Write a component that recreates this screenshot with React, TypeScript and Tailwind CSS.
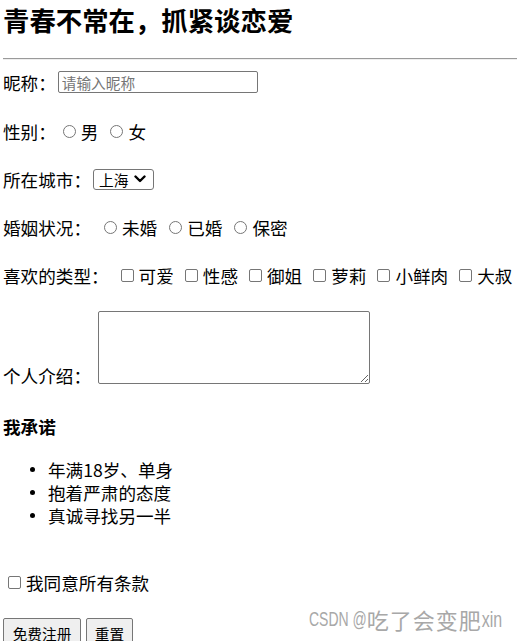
import React from "react";

const radioCls =
  "appearance-none shrink-0 w-[13px] h-[13px] rounded-full border border-[#767676] bg-white m-0";
const checkCls =
  "appearance-none shrink-0 w-[13px] h-[13px] rounded-[2px] border border-[#767676] bg-white m-0";

function Choice({ type, name, label, first, firstGap }: { type: "radio" | "checkbox"; name: string; label: string; first?: boolean; firstGap?: string }) {
  return (
    <label className={`flex items-center ${first ? firstGap : type === "radio" ? "ml-[12px]" : "ml-[11px]"}`}>
      <input type={type} name={name} className={type === "radio" ? radioCls : checkCls} />
      <span className="ml-[5px]">{label}</span>
    </label>
  );
}

export default function App() {
  const types = ["可爱", "性感", "御姐", "萝莉", "小鲜肉", "大叔"];
  const promises = ["年满18岁、单身", "抱着严肃的态度", "真诚寻找另一半"];

  return (
    <div className="relative w-full h-[641px] overflow-hidden bg-white text-black px-[3px] font-['Noto_Sans_CJK_SC','Microsoft_YaHei',sans-serif] text-[17.6px] leading-[23px]">
      <h2 className="h-[38px] flex items-center text-[26.4px] font-bold whitespace-nowrap">
        青春不常在，抓紧谈恋爱
      </h2>
      <hr className="mt-[20px] h-0 border-t border-t-[#9a9a9a] border-b border-b-[#eeeeee]" />

      <form onSubmit={(e) => e.preventDefault()}>
        <div className="h-[44px] flex items-center">
          <span>昵称：</span>
          <input
            type="text"
            placeholder="请输入昵称"
            className="ml-[2px] w-[200px] h-[22px] border border-[#767676] rounded-[2px] px-[3px] text-[14.67px] placeholder:text-[#757575] outline-none"
          />
        </div>

        <div className="mt-[3px] h-[48px] flex items-center">
          <span>性别：</span>
          <Choice type="radio" name="sex" label="男" first firstGap="ml-[7px]" />
          <Choice type="radio" name="sex" label="女" />
        </div>

        <div className="h-[48px] flex items-center">
          <span>所在城市：</span>
          <div className="ml-[2px] h-[21px] flex items-center border border-[#767676] rounded-[3px] pl-[5px] pr-[7px] text-[14.67px]">
            <span>上海</span>
            <svg className="ml-[6px]" width="12" height="8" viewBox="0 0 12 8" fill="none">
              <path d="M1.5 1.5 L6 6 L10.5 1.5" stroke="#000" strokeWidth="2.4" strokeLinecap="round" strokeLinejoin="round" />
            </svg>
          </div>
        </div>

        <div className="h-[48px] flex items-center">
          <span>婚姻状况：</span>
          <Choice type="radio" name="marry" label="未婚" first firstGap="ml-[13px]" />
          <Choice type="radio" name="marry" label="已婚" />
          <Choice type="radio" name="marry" label="保密" />
        </div>

        <div className="h-[48px] flex items-center whitespace-nowrap">
          <span>喜欢的类型：</span>
          {types.map((t, i) => (
            <Choice key={t} type="checkbox" name="like" label={t} first={i === 0} firstGap="ml-[12px]" />
          ))}
        </div>

        <div className="mt-[12px] flex items-end">
          <span className="mb-[-3px]">个人介绍：</span>
          <textarea className="ml-[7px] w-[272px] h-[73px] border border-[#767676] rounded-[2px] resize outline-none" />
        </div>

        <h4 className="mt-[31px] h-[23px] font-bold">我承诺</h4>
        <ul className="mt-[20px]">
          {promises.map((p) => (
            <li key={p} className="h-[23px] flex items-center">
              <span className="ml-[26.5px] w-[5px] h-[5px] rounded-full bg-black" />
              <span className="ml-[13.5px]">{p}</span>
            </li>
          ))}
        </ul>

        <label className="mt-[44px] h-[23px] flex items-center">
          <input type="checkbox" className={`ml-[5px] ${checkCls}`} />
          <span className="ml-[5px]">我同意所有条款</span>
        </label>

        <div className="mt-[24px] flex text-[14.67px]">
          <button type="submit" className="w-[78px] h-[30px] bg-[#efefef] border border-[#767676] rounded-[2px] flex items-center justify-center">
            免费注册
          </button>
          <button type="reset" className="ml-[5px] w-[47px] h-[30px] bg-[#efefef] border border-[#767676] rounded-[2px] flex items-center justify-center">
            重置
          </button>
        </div>
      </form>

      <div className="absolute left-[309px] top-[605px] flex items-center whitespace-nowrap text-[#a8a8a8]">
        <span className="inline-block scale-y-[1.4] text-[14px] font-['Liberation_Sans',sans-serif]">CSDN @</span>
        <span className="text-[22px] leading-[28px] tracking-[1px]">吃了会变肥</span>
        <span className="inline-block scale-y-[1.4] text-[16px] font-['Liberation_Sans',sans-serif]">xin</span>
      </div>
    </div>
  );
}
